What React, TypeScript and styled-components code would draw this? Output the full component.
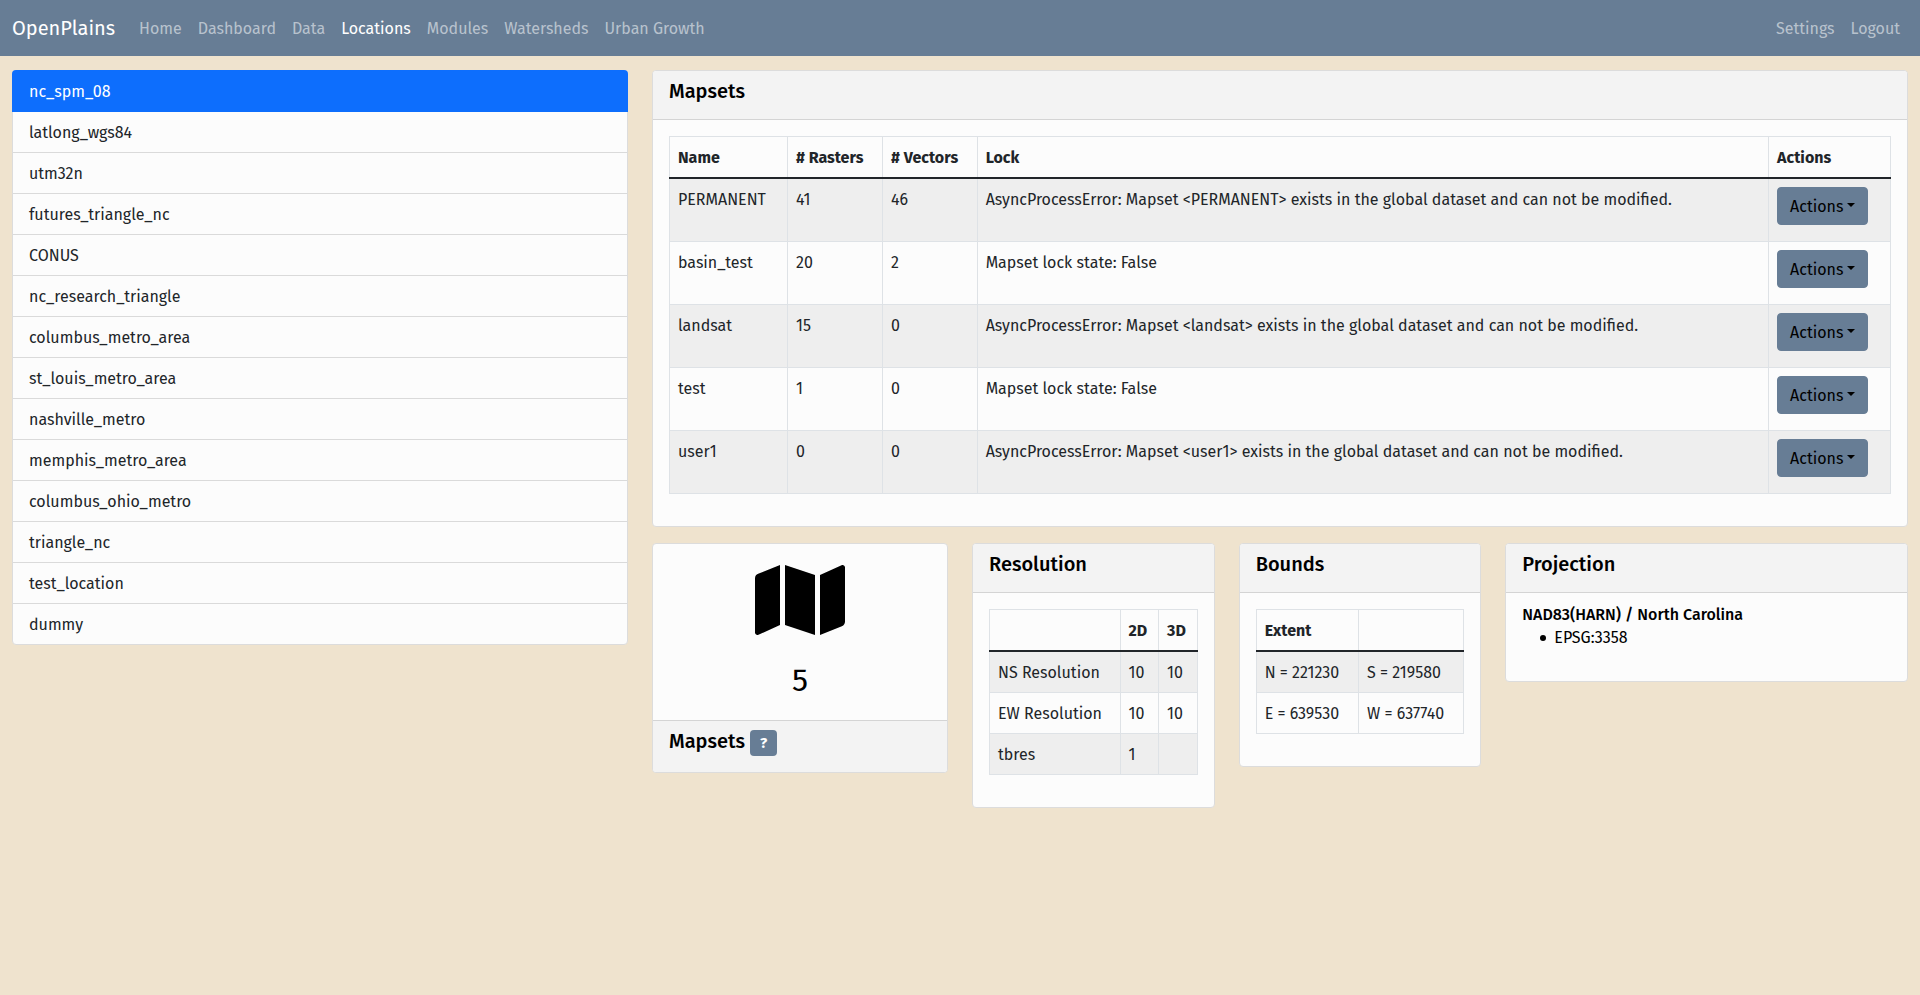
import React from "react";
import styled, { createGlobalStyle } from "styled-components";

const slate = "#677d95";
const ink = "#212529";
const paper = "#fcfcfc";
const rule = "#dee2e6";

const GlobalStyle = createGlobalStyle`
  *, *::before, *::after { box-sizing: border-box; }
  body {
    margin: 0;
    background: #efe3ce;
    color: ${ink};
    font-family: "Fira Sans", Roboto, "Liberation Sans", sans-serif;
    font-size: 16px;
    font-variant-numeric: lining-nums;
    line-height: 24px;
  }
  button { font: inherit; }
`;

const Navbar = styled.nav`
  display: flex;
  align-items: center;
  padding: 8px 12px;
  background: ${slate};
`;

const Brand = styled.a`
  margin-right: 16px;
  padding: 5px 0;
  color: #fff;
  font-size: 20px;
  line-height: 30px;
  text-decoration: none;
`;

const NavGroup = styled.div`
  display: flex;

  &:last-child { margin-left: auto; }
`;

const NavLink = styled.a<{ $active?: boolean }>`
  padding: 9px 8px 7px;
  color: ${(p) => (p.$active ? "#fff" : "rgba(255, 255, 255, 0.55)")};
  text-decoration: none;
`;

const Page = styled.main`
  display: grid;
  grid-template-columns: 1fr 2fr;
  align-items: start;
  padding-top: 14px;
`;

const Column = styled.div`
  min-width: 0;
  padding: 0 12px;
`;

const LocationList = styled.div`
  display: flex;
  flex-direction: column;
  border: 1px solid #dcdcdc;
  border-radius: 4px;
  background: ${paper};
`;

const LocationItem = styled.button<{ $active?: boolean }>`
  padding: 9px 16px 7px;
  border: 0;
  border-bottom: 1px solid #dadada;
  background: transparent;
  color: ${ink};
  text-align: left;

  &:last-child { border-bottom: 0; }

  ${(p) =>
    p.$active &&
    `
    margin: -1px -1px 0;
    padding: 10px 17px 7px;
    border-color: #0d6efd;
    border-radius: 4px 4px 0 0;
    background: #0d6efd;
    color: #fff;
  `}
`;

const Card = styled.section`
  overflow: hidden;
  margin-bottom: 16px;
  border: 1px solid #dcdcdc;
  border-radius: 4px;
  background: ${paper};
  color: #000;
`;

const CardHeader = styled.header`
  padding: 8px 16px 16px;
  border-bottom: 1px solid #d4d4d4;
  background: #f3f3f3;
`;

const CardFooter = styled.footer`
  padding: 8px 16px 16px;
  border-top: 1px solid #d4d4d4;
  background: #f3f3f3;
`;

const CardTitle = styled.h5`
  margin: 0;
  font-size: 20px;
  font-weight: 500;
  line-height: 24px;
`;

const CardBody = styled.div`
  padding: 16px;
`;

const CardSubtitle = styled.h6`
  margin: -4px 0 0;
  font-size: 16px;
  font-weight: 500;
  line-height: 20px;
`;

const Details = styled.ul`
  margin: 0 0 15px;
  padding: 1px 0 0 18px;
  list-style: none;

  li {
    display: flex;
    align-items: center;
    gap: 8px;
  }
  li::before {
    content: "";
    width: 6px;
    height: 6px;
    border-radius: 50%;
    background: #000;
  }
`;

const Stat = styled(CardBody)`
  display: flex;
  flex-direction: column;
  align-items: center;
  gap: 16px;
`;

const StatValue = styled.span`
  font-size: 32px;
  line-height: 48px;
`;

const HelpBadge = styled.button`
  padding: 5px 10px;
  border: 0;
  border-radius: 4px;
  background: ${slate};
  color: #fff;
  font-size: 15px;
  font-weight: 700;
  line-height: 16px;
`;

const Table = styled.table`
  width: 100%;
  margin-bottom: 16px;
  border-collapse: collapse;
  color: ${ink};
  text-align: left;
  vertical-align: top;

  th, td {
    height: 41px;
    padding: 9px 8px 7px;
    border: 1px solid ${rule};
    vertical-align: top;
  }
  th { font-weight: 700; }
  td:has(button) { padding: 8px; }
  tbody { border-top: 2px solid ${ink}; }
  tbody tr:nth-child(odd) { background: #eee; }
`;

const ActionsButton = styled.button`
  display: block;
  margin-bottom: 8px;
  padding: 7px 12px 5px;
  border: 1px solid ${slate};
  border-radius: 4px;
  background: ${slate};
  color: #000;
  white-space: nowrap;

  &::after {
    content: "";
    display: inline-block;
    margin-left: 4px;
    border: 4px solid transparent;
    border-top-color: #000;
    border-bottom: 0;
    vertical-align: 5px;
  }
`;

const Summary = styled.div`
  display: grid;
  grid-template-columns: 6fr 5fr 5fr 8fr;
  align-items: start;
  margin: 0 -12px;
`;

const navLinks = ["Home", "Dashboard", "Data", "Locations", "Modules", "Watersheds", "Urban Growth"];

const locations = [
  "nc_spm_08",
  "latlong_wgs84",
  "utm32n",
  "futures_triangle_nc",
  "CONUS",
  "nc_research_triangle",
  "columbus_metro_area",
  "st_louis_metro_area",
  "nashville_metro",
  "memphis_metro_area",
  "columbus_ohio_metro",
  "triangle_nc",
  "test_location",
  "dummy",
];

const lockError = (name: string) =>
  `AsyncProcessError: Mapset <${name}> exists in the global dataset and can not be modified.`;
const unlocked = "Mapset lock state: False";

const mapsets = [
  { name: "PERMANENT", rasters: 41, vectors: 46, lock: lockError("PERMANENT") },
  { name: "basin_test", rasters: 20, vectors: 2, lock: unlocked },
  { name: "landsat", rasters: 15, vectors: 0, lock: lockError("landsat") },
  { name: "test", rasters: 1, vectors: 0, lock: unlocked },
  { name: "user1", rasters: 0, vectors: 0, lock: lockError("user1") },
];

const resolutions = [
  ["NS Resolution", "10", "10"],
  ["EW Resolution", "10", "10"],
  ["tbres", "1", ""],
];

const bounds = [
  ["N = 221230", "S = 219580"],
  ["E = 639530", "W = 637740"],
];

function DataTable({ head, rows }: { head: string[]; rows: React.ReactNode[][] }) {
  return (
    <Table>
      <thead>
        <tr>
          {head.map((label, i) => (
            <th key={i} scope="col">{label}</th>
          ))}
        </tr>
      </thead>
      <tbody>
        {rows.map((row, i) => (
          <tr key={i}>
            {row.map((cell, j) => (
              <td key={j}>{cell}</td>
            ))}
          </tr>
        ))}
      </tbody>
    </Table>
  );
}

function MapIcon() {
  return (
    <svg width="90" height="80" viewBox="0 0 576 512" fill="currentColor" aria-hidden="true">
      <path d="M0 117.66v346.32c0 11.32 11.43 19.06 21.94 14.86L160 416V32L20.12 87.95A32.006 32.006 0 0 0 0 117.66zM192 416l192 64V96L192 32v384zM554.06 33.16L416 96v384l139.88-55.95A31.996 31.996 0 0 0 576 394.34V48.02c0-11.32-11.43-19.06-21.94-14.86z" />
    </svg>
  );
}

export default function App() {
  return (
    <>
      <GlobalStyle />
      <Navbar>
        <Brand href="#">OpenPlains</Brand>
        <NavGroup>
          {navLinks.map((label) => (
            <NavLink key={label} href="#" $active={label === "Locations"}>{label}</NavLink>
          ))}
        </NavGroup>
        <NavGroup>
          <NavLink href="#">Settings</NavLink>
          <NavLink href="#">Logout</NavLink>
        </NavGroup>
      </Navbar>
      <Page>
        <Column>
          <LocationList>
            {locations.map((name, i) => (
              <LocationItem key={name} type="button" $active={i === 0}>{name}</LocationItem>
            ))}
          </LocationList>
        </Column>
        <Column>
          <Card>
            <CardHeader><CardTitle>Mapsets</CardTitle></CardHeader>
            <CardBody>
              <DataTable
                head={["Name", "# Rasters", "# Vectors", "Lock", "Actions"]}
                rows={mapsets.map((m) => [
                  m.name,
                  m.rasters,
                  m.vectors,
                  m.lock,
                  <ActionsButton type="button">Actions</ActionsButton>,
                ])}
              />
            </CardBody>
          </Card>
          <Summary>
            <Column>
              <Card>
                <Stat>
                  <MapIcon />
                  <StatValue>5</StatValue>
                </Stat>
                <CardFooter>
                  <CardTitle>
                    Mapsets <HelpBadge type="button">?</HelpBadge>
                  </CardTitle>
                </CardFooter>
              </Card>
            </Column>
            <Column>
              <Card>
                <CardHeader><CardTitle>Resolution</CardTitle></CardHeader>
                <CardBody><DataTable head={["", "2D", "3D"]} rows={resolutions} /></CardBody>
              </Card>
            </Column>
            <Column>
              <Card>
                <CardHeader><CardTitle>Bounds</CardTitle></CardHeader>
                <CardBody><DataTable head={["Extent", ""]} rows={bounds} /></CardBody>
              </Card>
            </Column>
            <Column>
              <Card>
                <CardHeader><CardTitle>Projection</CardTitle></CardHeader>
                <CardBody>
                  <CardSubtitle>NAD83(HARN) / North Carolina</CardSubtitle>
                  <Details>
                    <li>EPSG:3358</li>
                  </Details>
                </CardBody>
              </Card>
            </Column>
          </Summary>
        </Column>
      </Page>
    </>
  );
}
